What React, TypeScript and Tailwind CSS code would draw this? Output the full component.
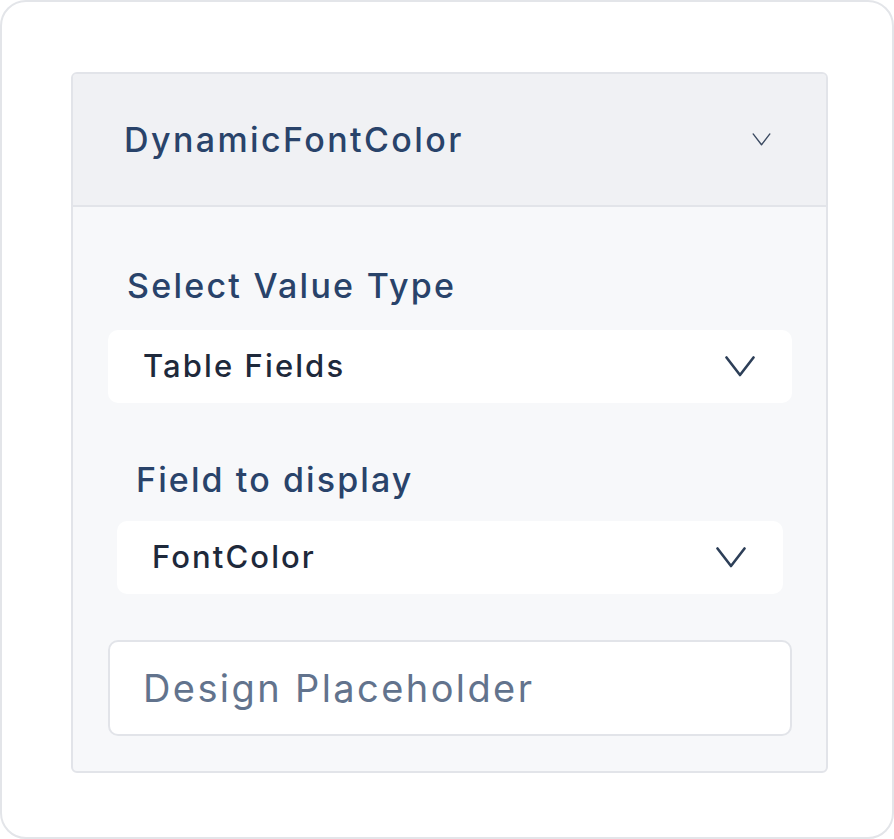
function Chevron({ className, strokeWidth }: { className?: string; strokeWidth: number }) {
  return (
    <svg viewBox="0 0 30 21" fill="none" className={className}>
      <path d="M1.5 1.5 L15 19 L28.5 1.5" stroke="currentColor" strokeWidth={strokeWidth} strokeLinecap="round" strokeLinejoin="round" />
    </svg>
  );
}

function SelectBox({ value, className }: { value: string; className?: string }) {
  return (
    <div className={`flex h-[73px] items-center justify-between rounded-[10px] bg-white pl-[35px] pr-[37px] ${className ?? ""}`}>
      <span className="text-[31px] font-medium tracking-[2.1px] text-[#1e293b]">{value}</span>
      <Chevron className="h-[21px] w-[30px] text-[#2d3f58]" strokeWidth={2.6} />
    </div>
  );
}

export default function App() {
  return (
    <div
      className="h-[839px] w-[894px] bg-white"
      style={{ fontFamily: "Inter, 'Noto Sans', sans-serif" }}
    >
      <div className="h-full w-full rounded-[26px] border-2 border-[#e3e5e9] pl-[69px] pt-[70px]">
        <div className="flex h-[701px] w-[757px] flex-col overflow-hidden rounded-[6px] border-2 border-[#e2e4e9] bg-[#f7f8fa]">
          <div className="flex h-[133px] shrink-0 items-center justify-between border-b-2 border-[#e2e4e9] bg-[#f0f1f4] pl-[51px] pr-[55px]">
            <span className="text-[34px] font-medium tracking-[2.4px] text-[#29436a]">DynamicFontColor</span>
            <Chevron className="h-[13px] w-[19px] text-[#3b4a61]" strokeWidth={2.2} />
          </div>
          <div className="flex flex-col pl-[35px] pr-[34px] pt-[59px]">
            <div className="pl-[19px] text-[34px] font-medium leading-[40px] tracking-[2.25px] text-[#29436a]">
              Select Value Type
            </div>
            <SelectBox value="Table Fields" className="mt-[24px]" />
            <div className="mt-[57px] pl-[28px] text-[34px] font-medium leading-[40px] tracking-[2.1px] text-[#29436a]">
              Field to display
            </div>
            <SelectBox value="FontColor" className="mx-[9px] mt-[21px]" />
            <div className="mt-[46px] flex h-[96px] items-center rounded-[10px] border-2 border-[#e2e4e9] bg-white pl-[33px]">
              <span className="text-[38px] tracking-[2.4px] text-[#62738d]">Design Placeholder</span>
            </div>
          </div>
        </div>
      </div>
    </div>
  );
}
